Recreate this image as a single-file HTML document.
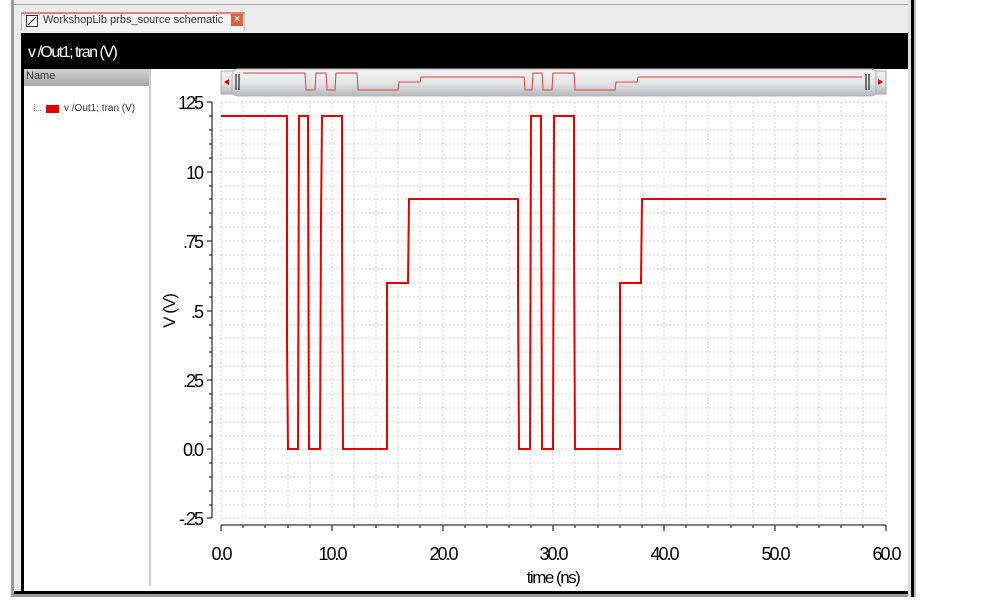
<!DOCTYPE html>
<html><head><meta charset="utf-8"><style>
body{margin:0;width:992px;height:607px;background:#fff;position:relative;overflow:hidden;font-family:"Liberation Sans",sans-serif}
.a{position:absolute}
</style></head><body>
<div class="a" style="left:11px;top:0;width:3px;height:597px;background:#999"></div>
<div class="a" style="left:14px;top:0;width:900px;height:594px;background:#ececec"></div>
<div class="a" style="left:14px;top:4px;width:900px;height:1px;background:#aaa"></div>
<div class="a" style="left:21px;top:12px;width:224px;height:19px;background:#f4f4f4;border:1px solid #bbb;border-top:2px solid #e08080;border-bottom:none;box-sizing:border-box"></div>
<div class="a" style="left:26px;top:15px;width:10px;height:10px;border:1px solid #333;background:#fff"></div>
<svg class="a" style="left:26px;top:15px" width="12" height="12"><line x1="2" y1="10" x2="10" y2="2" stroke="#000"/></svg>
<div class="a" style="left:43px;top:14px;font-size:11px;color:#333">WorkshopLib prbs_source schematic</div>
<div class="a" style="left:231px;top:14px;width:12px;height:12px;background:#e06040;color:#fff;font-size:10px;line-height:12px;text-align:center;font-weight:bold">×</div>
<div class="a" style="left:21px;top:33px;width:887px;height:36px;background:#000"></div>
<div class="a" style="left:28px;top:44px;color:#fff;font-size:16px;letter-spacing:-1.5px">v /Out1; tran (V)</div>
<div class="a" style="left:21px;top:69px;width:3px;height:523px;background:#000"></div>
<div class="a" style="left:24px;top:69px;width:884px;height:523px;background:#fff"></div>
<div class="a" style="left:24px;top:69px;width:126px;height:17px;background:linear-gradient(#d0d0d0,#a8a8a8);font-size:11px;color:#333;line-height:14px;padding-left:2px;box-sizing:border-box">Name</div>
<div class="a" style="left:149px;top:69px;width:2px;height:517px;background:#ccc"></div>
<div class="a" style="left:34px;top:104px;width:6px;height:6px;border-left:1px dotted #888;border-bottom:1px dotted #888"></div>
<div class="a" style="left:46px;top:105px;width:13px;height:8px;background:#e00000"></div>
<div class="a" style="left:64px;top:103px;font-size:10px;color:#333">v /Out1; tran (V)</div>
<div class="a" style="left:14px;top:591px;width:900px;height:3px;background:#000"></div>
<div class="a" style="left:14px;top:594px;width:900px;height:3px;background:#999"></div>
<div class="a" style="left:908px;top:0;width:3px;height:597px;background:#ddd"></div>
<div class="a" style="left:911px;top:0;width:3px;height:597px;background:#000"></div>
<div class="a" style="left:914px;top:0;width:2px;height:597px;background:#bbb"></div>
<svg class="a" style="left:0;top:0" width="992" height="607" font-family="Liberation Sans Narrow, Liberation Sans, sans-serif">
<defs><linearGradient id="g" x1="0" y1="0" x2="0" y2="1"><stop offset="0" stop-color="#f4f4f4"/><stop offset=".5" stop-color="#e6e6e6"/><stop offset="1" stop-color="#b4b8bc"/></linearGradient></defs>
<rect x="221" y="71" width="12" height="23" fill="url(#g)" stroke="#aaa"/>
<polygon points="224,82 229,79 229,85" fill="#d00"/>
<rect x="232" y="69" width="645" height="27" rx="6" fill="url(#g)" stroke="#b0b4b8"/>
<rect x="876" y="71" width="10" height="23" fill="url(#g)" stroke="#aaa"/>
<polygon points="883,82 878,79 878,85" fill="#d00"/>
<line x1="236" y1="74" x2="236" y2="90" stroke="#000"/><line x1="239" y1="74" x2="239" y2="90" stroke="#000"/>
<line x1="866" y1="74" x2="866" y2="90" stroke="#000"/><line x1="869" y1="74" x2="869" y2="90" stroke="#000"/>
<polyline fill="none" stroke="#e04040" stroke-width="1" points="243,73 305,73 306,90 315,90 316,73 326,73 327,90 335,90 336,73 357,73 358,90 398,90 399,82 420,82 421,77 524,77 525,90 532,90 533,73 542,73 543,90 552,90 553,73 574,73 575,90 615,90 616,82 637,82 638,77 862,77"/>
<g stroke="#d4d4d4" stroke-dasharray="2,2" stroke-width="1">
<path d="M221 102H886M221 116H886M221 130H886M221 144H886M221 158H886M221 172H886M221 186H886M221 199H886M221 213H886M221 227H886M221 241H886M221 255H886M221 269H886M221 283H886M221 297H886M221 311H886M221 325H886M221 338H886M221 352H886M221 366H886M221 380H886M221 394H886M221 408H886M221 422H886M221 436H886M221 449H886M221 463H886M221 477H886M221 491H886M221 505H886M221 518H886"/>
<path d="M221 102V518M243 102V518M265 102V518M288 102V518M310 102V518M332 102V518M354 102V518M376 102V518M398 102V518M420 102V518M443 102V518M465 102V518M487 102V518M509 102V518M531 102V518M553 102V518M575 102V518M598 102V518M620 102V518M642 102V518M664 102V518M686 102V518M708 102V518M731 102V518M753 102V518M775 102V518M797 102V518M819 102V518M841 102V518M863 102V518M886 102V518"/>
</g>
<g stroke="#000" stroke-width="1">
<path d="M212 102V518M207 102H212M207 172H212M207 241H212M207 311H212M207 380H212M207 449H212M207 518H212M209 116H212M209 130H212M209 144H212M209 158H212M209 186H212M209 199H212M209 213H212M209 227H212M209 255H212M209 269H212M209 283H212M209 297H212M209 325H212M209 338H212M209 352H212M209 366H212M209 394H212M209 408H212M209 422H212M209 436H212M209 463H212M209 477H212M209 491H212M209 505H212"/>
<path d="M221 525H886M221 525V531M332 525V531M443 525V531M553 525V531M664 525V531M775 525V531M886 525V531M243 525V528M265 525V528M288 525V528M310 525V528M354 525V528M376 525V528M398 525V528M420 525V528M465 525V528M487 525V528M509 525V528M531 525V528M575 525V528M598 525V528M620 525V528M642 525V528M686 525V528M708 525V528M731 525V528M753 525V528M797 525V528M819 525V528M841 525V528M863 525V528"/>
</g>
<g font-size="18" text-anchor="end" fill="#000" letter-spacing="-2">
<text x="202" y="109">125</text><text x="202" y="179">10</text><text x="202" y="248">.75</text><text x="202" y="318">.5</text><text x="202" y="387">.25</text><text x="202" y="456">0.0</text><text x="202" y="525">-.25</text>
</g>
<g font-size="18" text-anchor="middle" fill="#000" letter-spacing="-2">
<text x="221" y="560">0.0</text><text x="332" y="560">10.0</text><text x="443" y="560">20.0</text><text x="553" y="560">30.0</text><text x="664" y="560">40.0</text><text x="775" y="560">50.0</text><text x="886" y="560">60.0</text>
<text x="553" y="583" font-size="17" letter-spacing="-1.5">time (ns)</text>
</g>
<text transform="translate(175,311) rotate(-90)" font-size="17" text-anchor="middle" letter-spacing="-1">V (V)</text>
<polyline fill="none" stroke="#e00000" stroke-width="2" points="221,116 287,116 287,345 288,449 298,449 299,116 308,116 308,155 309,449 320,449 321,220 322,116 342,116 342,240 343,449 387,449 387,283 408,283 409,199 518,199 518,290 519,449 530,449 531,116 541,116 541,155 542,449 553,449 554,116 574,116 574,240 575,449 620,449 620,283 641,283 642,199 886,199"/>
</svg>
</body></html>
